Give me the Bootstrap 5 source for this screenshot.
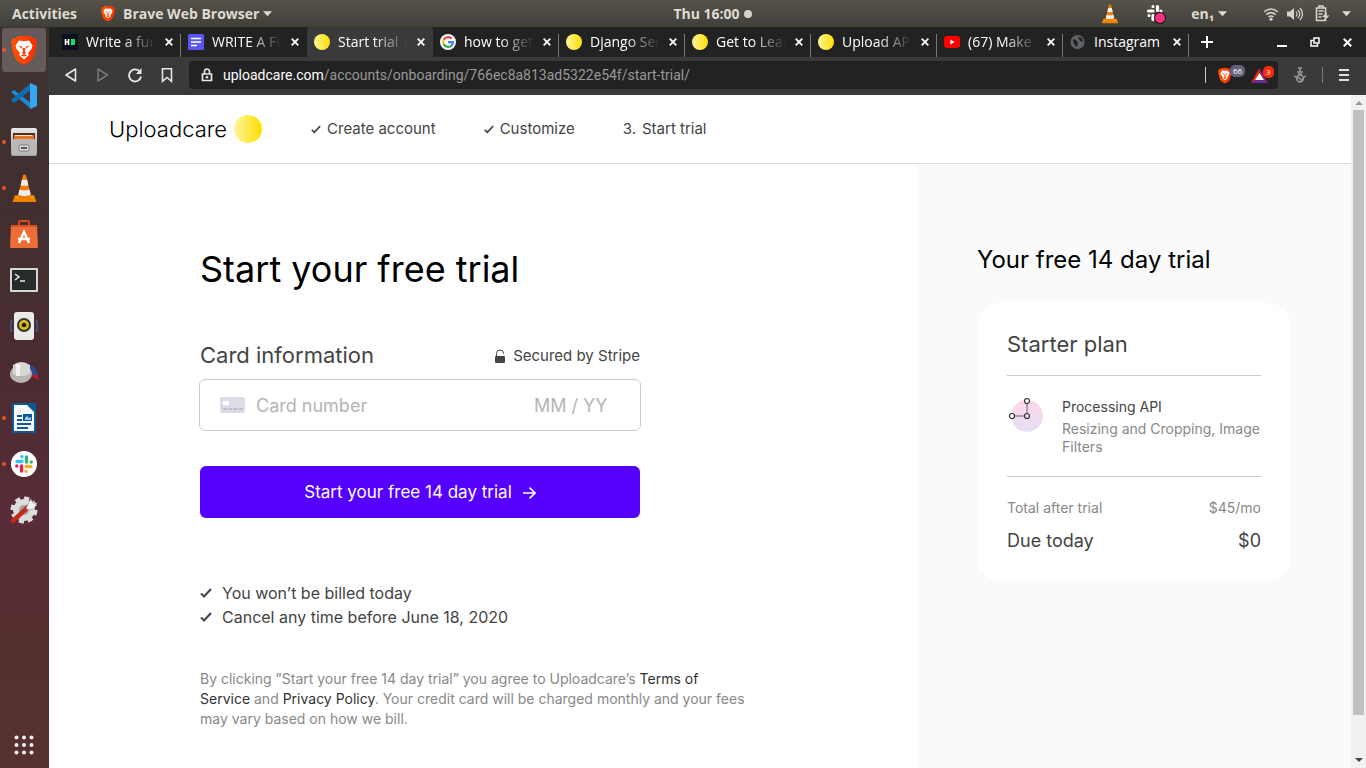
<!DOCTYPE html>
<html lang="en">
<head>
<meta charset="utf-8">
<meta name="viewport" content="width=device-width, initial-scale=1">
<title>Start trial | Uploadcare</title>
<link rel="stylesheet" href="https://cdn.jsdelivr.net/npm/bootstrap@5.3.0/dist/css/bootstrap.min.css">
<style>
  body { font-family: Inter, "Liberation Sans", sans-serif; color: #444; background: #fff; }
  svg { display: block; flex: none; }
  button.bare { border: 0; background: none; padding: 0; color: inherit; }
  .shell { font-family: "Open Sans", "Noto Sans", sans-serif; font-size: 14px; line-height: 20px; }

  /* desktop panel */
  .panel { display: grid; grid-template-columns: 1fr auto 1fr; height: 27px; padding: 0 15px 0 12px; background: linear-gradient(#57534a, #403f3a); color: #dfdbd2; font-weight: 700; }
  .panel .clock { margin-left: 62px; }
  .tray-gap { margin-left: 36px; }
  .tray-gap-sm { margin-left: 26px; }
  .dock { width: 49px; padding-right: 1px; background: linear-gradient(#3f3332 0%, #40302f 22%, #4a2c30 45%, #582c38 66%, #562f30 82%, #553230 100%); }
  .dock-app { position: relative; height: 46px; width: 100%; display: flex; align-items: center; justify-content: center; }
  .dock-app.focused::after { content: ""; position: absolute; inset: 1px 2px; border-radius: 3px; background: rgba(255,255,255,.2); }
  .dock-app svg { position: relative; z-index: 1; }
  .dock-app.running::before { content: ""; position: absolute; left: 2px; width: 4px; height: 4px; border-radius: 50%; background: #e95420; z-index: 1; }

  /* browser frame */
  .tabs { height: 30px; background: #222; padding-left: 6px; color: #fff; }
  .tab { flex: 0 1 126px; min-width: 0; height: 30px; padding: 0 8px 0 7px; gap: 8px; position: relative; }
  .tab.active-tab { background: #3a3a3a; border-radius: 4px 4px 0 0; }
  .tab.split::after { content: ""; position: absolute; right: 0; top: 7px; bottom: 0; width: 1px; background: #777; }
  .tab-title { flex: 1; overflow: hidden; white-space: nowrap; -webkit-mask-image: linear-gradient(90deg, #000 50%, transparent 98%); mask-image: linear-gradient(90deg, #000 50%, transparent 98%); }
  .tab-title.whole { -webkit-mask-image: none; mask-image: none; }
  .window-buttons { gap: 23px; margin-right: 14px; }
  .toolbar { height: 38px; background: #3a3a3a; padding: 4px 17px 6px 13px; color: #e8e8e8; }
  .omnibox { background: #222; border-radius: 4px; height: 28px; padding: 0 2px 0 10px; margin-left: 14px; }
  .url { font-family: Roboto, sans-serif; color: #999; }
  .shields { margin-right: 19px; }
  .counter { position: absolute; top: -2px; left: 12px; font-size: 8px; line-height: 12px; height: 12px; padding: 0 3px; border-radius: 5px; color: #fff; font-weight: 400; }
  .counter-blocked { background: #62617a; }
  .counter-ads { background: #fb2a08; }
  .rule { width: 1px; height: 16px; background: #777; }
  .rule-light { background: #ccc; }

  .scroller { width: 15px; background: #f1f1f1; padding: 4px 0; }
  .scroller .thumb { background: #c1c1c1; margin-top: 3px; flex: 0 0 91%; }

  /* page */
  .site-header { height: 69px; border-bottom: 1px solid #ddd; padding-left: 60px; font-size: 15px; }
  .brand { font-family: Inter, sans-serif; font-weight: 300; font-size: 22px; color: #000; gap: 7px; text-decoration: none; margin-right: 49px; }
  .sun { border-radius: 50%; background: linear-gradient(90deg, #fff59c, #ffde00); flex: none; }
  .sun-lg { width: 28px; height: 28px; }
  .sun-sm { width: 16px; height: 16px; }
  .steps { gap: 48px; }
  .steps li { gap: 6px; }
  .checkout { padding: 81px 24px 0 151px; }
  .checkout h1 { font-size: 36px; line-height: 48px; font-weight: 400; color: #000; margin: 0 0 48px; }
  .pay-form { max-width: 440px; }
  .section-title { font-size: 22px; line-height: 28px; }
  .secured { font-size: 15px; padding-top: 2px; }
  .card-box { height: 52px; border: 1px solid #ccc; border-radius: 6px; padding: 0 32px 0 20px; margin: 10px -1px 0; gap: 11px; font-size: 18px; }
  .card-box input { border: 0; outline: 0; padding: 0; min-width: 0; color: #444; background: none; }
  .card-box input::placeholder { color: #b5b5b5; opacity: 1; }
  .card-box .expiry { width: 80px; padding-top: 1px; }
  .btn-trial { height: 52px; margin-top: 35px; padding-top: 8px; border-radius: 6px; background: #50f; color: #fff; font-size: 17px; gap: 11px; }
  .btn-trial:hover { background: #4a00de; color: #fff; }
  .promises { margin: 63px 0 0; font-size: 16px; line-height: 24px; }
  .promises li { gap: 10px; }
  .terms { margin: 40px 0 0; max-width: 550px; font-size: 14px; line-height: 20px; color: #888; }
  .terms a { color: #333; text-decoration: none; }
  .summary { background: #fafafa; padding: 80px 60px 0; }
  .summary h2 { font-size: 24px; line-height: 32px; font-weight: 400; color: #000; margin: 0 0 27px; }
  .plan { background: #fff; border-radius: 24px; padding: 25px 30px 26px; }
  .plan h3 { font-size: 22px; line-height: 32px; font-weight: 400; margin: 0; padding-bottom: 15px; border-bottom: 1px solid #ccc; }
  .feature { padding: 22px 0 20px; border-bottom: 1px solid #ccc; font-size: 14px; line-height: 18px; gap: 17px; }
  .muted { color: #888; }
  .totals { font-size: 14px; line-height: 20px; padding-top: 21px; }
  .due { font-size: 18px; line-height: 28px; padding-top: 9px; }
</style>
</head>
<body class="vh-100 d-flex flex-column overflow-hidden">

<svg width="0" height="0" class="position-absolute" aria-hidden="true">
  <defs>
    <linearGradient id="silver" x1="0" y1="0" x2="0" y2="1"><stop offset="0" stop-color="#e8e8e6"/><stop offset="1" stop-color="#a3a3a1"/></linearGradient>
    <linearGradient id="petal" x1="0" y1="0" x2="0" y2="1"><stop offset="0" stop-color="#ffd6e8"/><stop offset="1" stop-color="#e6e0f5"/></linearGradient>
    <linearGradient id="flame" x1="0" x2="1"><stop offset="0" stop-color="#ff5500"/><stop offset="1" stop-color="#ff2a00"/></linearGradient>
  </defs>
  <symbol id="lion" viewBox="0 0 26 30">
    <path fill="url(#flame)" d="M7 1h12l2.500 2.500L24 3l2 4-1 3 .5 2-3.500 11-3 3.500L13 30l-6-3.500L4 23 .5 12 1 10 0 7l2-4 2.500.5z"/>
    <path fill="#fff" d="M8 5.500l5 .8 5-.8 3.500 5-1 3.500-3.500 4 1 2-5 4.500L8 20l1-2-3.500-4-1-3.500z"/>
    <path fill="#ff4400" d="M7 10.500l4.500 1.200-.8 1.800zM19 10.500l-4.500 1.200.8 1.800zM11.500 13h3l-.5 4 1.500 1-2.500 1.500-2.500-1.500 1.500-1zM9.500 20.500l3.500-1.300 3.500 1.300-3.500 1z"/>
  </symbol>
  <symbol id="cone" viewBox="0 0 26 30">
    <path fill="#f08200" d="M3 22h20l2.500 7H.5z"/><path fill="#ffa726" d="M5 23h16l1 2H4z"/>
    <path fill="#f57c00" d="M11.500 1q1.500-1 3 0l5.500 23q-7 4-14 0z"/>
    <path fill="#eee" d="M10.300 6h5.400l1.300 5.500q-4 1.500-8 0zM7.800 16q5 2 10.400 0l1.300 5.500q-6.500 3-13 0z"/>
  </symbol>
  <symbol id="hash" viewBox="0 0 18 18">
    <g stroke-width="3.400" stroke-linecap="round" fill="none">
      <path stroke="#36c5f0" d="M7 1.800h.01M7 6.500H2"/><path stroke="#2eb67d" d="M16.200 7h.01M11.500 7V2"/>
      <path stroke="#ecb22e" d="M11 16.200h.01M11 11.500h5"/><path stroke="#e01e5a" d="M1.800 11h.01M6.500 11v5"/>
    </g>
  </symbol>
  <symbol id="cross" viewBox="0 0 8 8"><path d="M.7.7l6.600 6.600M7.300.7L.7 7.300" stroke="currentColor" stroke-width="1.800"/></symbol>
  <symbol id="tick" viewBox="0 0 12 10"><path d="M1 5.500L4 8.500 11 1" fill="none" stroke="currentColor" stroke-width="2"/></symbol>
  <symbol id="down" viewBox="0 0 10 6"><path d="M0 0h10L5 5.500z" fill="currentColor"/></symbol>
</svg>

<header class="shell panel align-items-center">
  <div class="d-flex align-items-center">
    <button class="bare fw-bold">Activities</button>
    <button class="bare fw-bold d-flex align-items-center ms-4">
      <svg width="14" height="17" class="me-2"><use href="#lion"/></svg>Brave Web Browser
      <svg width="9" height="6" class="ms-1"><use href="#down"/></svg>
    </button>
  </div>
  <button class="bare clock fw-bold d-flex align-items-center">Thu 16:00<svg width="8" height="8" class="ms-1"><circle cx="4" cy="4" r="4" fill="#d5d2ca"/></svg></button>
  <div class="d-flex align-items-center justify-content-end">
    <svg width="18" height="20"><use href="#cone"/></svg>
    <svg width="22" height="22" viewBox="0 0 22 22" class="tray-gap-sm"><g stroke="#fff" stroke-width="3.200" stroke-linecap="round"><path d="M8 3.500h.01M8 8H3.500M12.500 3.500v4M16 8h.01M4 12.500h.01M8 12.500v4"/></g><circle cx="15" cy="15" r="6" fill="#111"/><circle cx="15" cy="15" r="5" fill="#f5317f"/></svg>
    <span class="ms-4">en₁</span><svg width="9" height="6" class="ms-1"><use href="#down"/></svg>
    <svg width="16" height="14" viewBox="0 0 16 14" class="tray-gap"><g fill="none" stroke="#d5d2ca" stroke-width="1.600"><path d="M1 5q7-6 14 0M3.300 7.600q4.700-4 9.400 0M5.500 10q2.500-2 5 0"/></g><circle cx="8" cy="12.200" r="1.600" fill="#d5d2ca"/></svg>
    <svg width="16" height="14" viewBox="0 0 16 14" class="mx-2 ms-2"><path fill="#d5d2ca" d="M0 4.500h3L7 1v12L3 9.500H0z"/><path d="M9 4.500q2 2.500 0 5M11 2.800q3.500 4.200 0 8.400M13 1q5 6 0 12" fill="none" stroke="#d5d2ca" stroke-width="1.200"/></svg>
    <svg width="15" height="17" viewBox="0 0 15 17" class="ms-1 me-1"><path d="M4 3V1h4v2M1.500 3h9v12.500h-9zM3.500 6h5M3.500 9h4M3.500 12h3" fill="none" stroke="#d5d2ca" stroke-width="1.600"/><path d="M12 7l-5 5h3l-1 4 5.500-5.500h-3z" fill="#d5d2ca"/></svg>
    <svg width="9" height="6" class="ms-2"><use href="#down"/></svg>
  </div>
</header>

<div class="d-flex flex-fill overflow-hidden">
  <nav class="dock flex-shrink-0 d-flex flex-column" aria-label="Applications">
    <button class="bare dock-app focused running" aria-label="Brave"><svg width="26" height="30"><use href="#lion"/></svg></button>
    <button class="bare dock-app" aria-label="Code"><svg width="26" height="26" viewBox="0 0 26 26"><path fill="#1f8ad2" d="M0 9l3-2 17 13v6L0 9z"/><path fill="#0e6db3" d="M0 17l3 3L20 7V0L0 17z"/><path fill="#35a6f0" d="M19 0l7 3v20l-7 3z"/></svg></button>
    <button class="bare dock-app running" aria-label="Files"><svg width="26" height="28" viewBox="0 0 26 28"><rect width="26" height="28" rx="2" fill="url(#silver)"/><path fill="#4a3326" d="M2 5h22v6H2z"/><path fill="#e8752a" d="M3 7h20v4H3z"/><path fill="#ffe0b8" d="M4 7h17v1H4z"/><path fill="#b8b8b6" d="M1 11h24v16H1z"/><rect x="8" y="17" width="10" height="6" rx="1.500" fill="#ddd" stroke="#777"/><path d="M10 20h6" stroke="#555" stroke-width="2"/></svg></button>
    <button class="bare dock-app running" aria-label="Media player"><svg width="25" height="29"><use href="#cone"/></svg></button>
    <button class="bare dock-app" aria-label="Software"><svg width="28" height="28" viewBox="0 0 28 28"><path d="M9 8V3q0-2 2-2h6q2 0 2 2v5" fill="none" stroke="#d64a1c" stroke-width="2"/><path fill="#ee6c35" d="M1 5h26l1 22q0 1-1 1H1q-1 0-1-1z"/><path fill="#d9531f" d="M1 5h26v2H1z"/><path d="M9 23l5-11 5 11M8 19h12" fill="none" stroke="#fff" stroke-width="2.400"/></svg></button>
    <button class="bare dock-app" aria-label="Terminal"><svg width="28" height="24" viewBox="0 0 28 24"><rect width="28" height="24" rx="1" fill="#d5d5d3"/><rect x="2" y="2" width="24" height="20" fill="#262b2c"/><path d="M5 6l4 3-4 3M10 13h5" fill="none" stroke="#eee" stroke-width="1.500"/></svg></button>
    <button class="bare dock-app" aria-label="Sound"><svg width="28" height="30" viewBox="0 0 28 30"><path d="M2 9q-3 6 0 12M26 9q3 6 0 12" fill="none" stroke="#3d5580" stroke-width="2"/><rect x="4" y="1" width="20" height="28" rx="3" fill="#eaeae8"/><circle cx="14" cy="14" r="7" fill="#34342c"/><circle cx="14" cy="14" r="5" fill="#d8b820"/><circle cx="14" cy="14" r="2.300" fill="#222"/></svg></button>
    <button class="bare dock-app" aria-label="Mixer"><svg width="30" height="24" viewBox="0 0 30 24"><path d="M20 5q9 2 9 13l-9-3z" fill="#2b4f8e"/><path d="M22 15h7v5z" fill="#d01616"/><ellipse cx="12" cy="14" rx="11" ry="9" fill="#b9b3b1"/><path d="M4 5q8-6 17 0v9q-9 4-17 0z" fill="#d9d5d3"/><path d="M7 4h4v12H7z" fill="#f3f1f0"/></svg></button>
    <button class="bare dock-app running" aria-label="Writer"><svg width="24" height="30" viewBox="0 0 24 30"><path fill="#0d5a93" d="M0 0h16l8 8v22H0z"/><path fill="#f6f8fa" d="M2 2h13l7 7v19H2z"/><path fill="#0d5a93" d="M16 0h8v8z"/><path d="M5 13h5M5 17h5M5 21h14M5 25h11" stroke="#0d5a93" stroke-width="2"/><path fill="#0d5a93" d="M11 11h9v7h-9z"/><path fill="#9fc9e8" d="M13 15l2-2 2 2 2-1v3h-6z"/></svg></button>
    <button class="bare dock-app running" aria-label="Slack"><svg width="26" height="26" viewBox="0 0 26 26"><circle cx="13" cy="13" r="13" fill="#fff"/><use href="#hash" x="4" y="4" width="18" height="18"/></svg></button>
    <button class="bare dock-app" aria-label="Settings"><svg width="28" height="28" viewBox="0 0 28 28"><circle cx="14" cy="14" r="10.500" fill="#ddd" stroke="#ddd"/><circle cx="14" cy="14" r="11.500" fill="none" stroke="#ddd" stroke-width="4" stroke-dasharray="5 4"/><circle cx="14" cy="14" r="5" fill="#a9a09f"/><path d="M3 25L18 11" stroke="#c22b1a" stroke-width="4.500" stroke-linecap="round"/><path d="M16 12l5-9 2 4 4 0-3 6-6 1z" fill="#f2f2f2" stroke="#888" stroke-width=".6"/></svg></button>
    <button class="bare dock-app mt-auto" aria-label="Show applications"><svg width="20" height="20" viewBox="0 0 20 20" fill="#f2f0ef"><circle cx="2.500" cy="2.500" r="2"/><circle cx="10" cy="2.500" r="2"/><circle cx="17.500" cy="2.500" r="2"/><circle cx="2.500" cy="10" r="2"/><circle cx="10" cy="10" r="2"/><circle cx="17.500" cy="10" r="2"/><circle cx="2.500" cy="17.500" r="2"/><circle cx="10" cy="17.500" r="2"/><circle cx="17.500" cy="17.500" r="2"/></svg></button>
  </nav>

  <div class="flex-fill d-flex flex-column overflow-hidden">
    <div class="shell tabs d-flex align-items-center flex-shrink-0">
      <div class="tab split d-flex align-items-center"><svg width="16" height="16" viewBox="0 0 16 16"><path fill="#0b1020" d="M0 0h16v16H0z"/><path d="M3.500 5v6M6.500 5v6M3 8h4" stroke="#fff" stroke-width="1.600"/><path fill="#00ea64" d="M9 5h4v6H9z"/></svg><span class="tab-title">Write a fun</span><button class="bare" aria-label="Close tab"><svg width="8" height="8"><use href="#cross"/></svg></button></div>
      <div class="tab d-flex align-items-center"><svg width="16" height="16" viewBox="0 0 16 16"><rect width="16" height="16" rx="1.500" fill="#5b55f5"/><path d="M3 4.500h10M3 8h10M3 11.500h6" stroke="#fff" stroke-width="1.700"/></svg><span class="tab-title">WRITE A FU</span><button class="bare" aria-label="Close tab"><svg width="8" height="8"><use href="#cross"/></svg></button></div>
      <div class="tab active-tab d-flex align-items-center"><span class="sun sun-sm"></span><span class="tab-title">Start trial |</span><button class="bare" aria-label="Close tab"><svg width="8" height="8"><use href="#cross"/></svg></button></div>
      <div class="tab split d-flex align-items-center"><svg width="16" height="16" viewBox="0 0 16 16"><circle cx="8" cy="8" r="8" fill="#fff"/><g fill="none" stroke-width="2.200"><path stroke="#ea4335" d="M11.500 4.600A5 5 0 0 0 3.700 5.700"/><path stroke="#fbbc05" d="M3.700 5.700a5 5 0 0 0 0 4.600"/><path stroke="#34a853" d="M3.700 10.300a5 5 0 0 0 7.500 1.500"/><path stroke="#4285f4" d="M11.200 11.800A5 5 0 0 0 13 8.200H8"/></g></svg><span class="tab-title">how to get</span><button class="bare" aria-label="Close tab"><svg width="8" height="8"><use href="#cross"/></svg></button></div>
      <div class="tab split d-flex align-items-center"><span class="sun sun-sm"></span><span class="tab-title">Django Ser</span><button class="bare" aria-label="Close tab"><svg width="8" height="8"><use href="#cross"/></svg></button></div>
      <div class="tab split d-flex align-items-center"><span class="sun sun-sm"></span><span class="tab-title">Get to Lear</span><button class="bare" aria-label="Close tab"><svg width="8" height="8"><use href="#cross"/></svg></button></div>
      <div class="tab split d-flex align-items-center"><span class="sun sun-sm"></span><span class="tab-title">Upload API</span><button class="bare" aria-label="Close tab"><svg width="8" height="8"><use href="#cross"/></svg></button></div>
      <div class="tab split d-flex align-items-center"><svg width="16" height="12" viewBox="0 0 16 12"><rect width="16" height="12" rx="3" fill="#f00"/><path fill="#fff" d="M6.300 3.500v5L10.500 6z"/></svg><span class="tab-title">(67) Make y</span><button class="bare" aria-label="Close tab"><svg width="8" height="8"><use href="#cross"/></svg></button></div>
      <div class="tab split d-flex align-items-center"><svg width="16" height="16" viewBox="0 0 16 16"><circle cx="7.500" cy="8" r="7" fill="#5f6368"/><path d="M3 5l3 1 2 3-1 4q-4-2-4-8zM8 3l4 1 1 4-3-1z" fill="#222"/></svg><span class="tab-title whole">Instagram</span><button class="bare" aria-label="Close tab"><svg width="8" height="8"><use href="#cross"/></svg></button></div>
      <button class="bare ms-2 ps-1" aria-label="New tab"><svg width="12" height="12"><path d="M6 0v12M0 6h12" stroke="#fff" stroke-width="2"/></svg></button>
      <div class="window-buttons d-flex align-items-center ms-auto">
        <button class="bare" aria-label="Minimize"><svg width="10" height="10"><path d="M0 9h10" stroke="#fff" stroke-width="2"/></svg></button>
        <button class="bare" aria-label="Restore"><svg width="10" height="10"><path d="M4 1h5v5H4zM3 3.500H1V9h6.500V7" fill="none" stroke="#fff" stroke-width="1.500"/></svg></button>
        <button class="bare" aria-label="Close"><svg width="9" height="9"><use href="#cross"/></svg></button>
      </div>
    </div>

    <div class="shell toolbar d-flex align-items-center flex-shrink-0">
      <button class="bare" aria-label="Back"><svg width="17" height="16" viewBox="0 0 17 16"><path d="M13.500 2v12L4 8z" fill="none" stroke="currentColor" stroke-width="1.600" stroke-linejoin="round"/></svg></button>
      <button class="bare ms-3" aria-label="Forward" disabled><svg width="16" height="16" viewBox="0 0 16 16"><path d="M3 2v12l9.500-6z" fill="none" stroke="#777" stroke-width="1.600" stroke-linejoin="round"/></svg></button>
      <button class="bare ms-3" aria-label="Reload"><svg width="16" height="16" viewBox="0 0 16 16"><path d="M13 5A6 6 0 1 0 14 9.500" fill="none" stroke="currentColor" stroke-width="1.800"/><path fill="currentColor" d="M14.500 1v6H9z"/></svg></button>
      <button class="bare ms-3" aria-label="Bookmark"><svg width="16" height="16" viewBox="0 0 16 16"><path d="M3.500 1.800h9v12.500L8 10.500l-4.500 3.800z" fill="none" stroke="currentColor" stroke-width="1.600"/></svg></button>
      <div class="omnibox d-flex align-items-center flex-fill">
        <svg width="16" height="16" viewBox="0 0 16 16" class="me-2"><path d="M3.500 7h9v6.500h-9zM5.500 6.500V4.500a2.500 2.500 0 0 1 5 0v2" fill="none" stroke="currentColor" stroke-width="1.700"/><circle cx="8" cy="10.200" r="1.300" fill="currentColor"/></svg>
        <div class="flex-fill text-nowrap overflow-hidden url"><span class="text-white">uploadcare.com</span>/accounts/onboarding/766ec8a813ad5322e54f/start-trial/</div>
        <div class="rule rule-light me-2"></div>
        <button class="bare shields position-relative ms-1" aria-label="Shields"><svg width="14" height="17"><use href="#lion"/></svg><span class="counter counter-blocked">66</span></button>
        <button class="bare position-relative me-2" aria-label="Rewards"><svg width="17" height="15" viewBox="0 0 17 15"><path fill="#ff2000" d="M8.500 0v5L4 12l-4 3z"/><path fill="#9e1f63" d="M8.500 0L17 15l-4-3-4.500-7z"/><path fill="#662d91" d="M0 15h17l-4-3H4z"/><path fill="#fff" d="M8.500 5l4.500 7H4z"/></svg><span class="counter counter-ads">3</span></button>
      </div>
      <svg width="12" height="18" viewBox="0 0 12 18" class="ms-3"><g fill="none" stroke="#999" stroke-width="1.400"><path d="M4 2h4M6 2v4M3 6h6M4 8h4"/><circle cx="6" cy="12.500" r="3.500"/><path d="M3 13q2-3 3 0t3-1M0 10l2 1M12 10l-2 1"/></g></svg>
      <div class="rule ms-3"></div>
      <button class="bare ms-3" aria-label="Menu"><svg width="10" height="14"><path d="M0 2h10M0 7h10M0 12h10" stroke="#e0e0e0" stroke-width="2"/></svg></button>
    </div>

    <div class="flex-fill d-flex overflow-hidden">
      <div class="flex-fill d-flex flex-column overflow-hidden">
        <header class="site-header d-flex align-items-center flex-shrink-0">
          <a href="#" class="brand d-flex align-items-center">Uploadcare<span class="sun sun-lg"></span></a>
          <ol class="steps list-unstyled d-flex mb-0">
            <li class="d-flex align-items-center"><svg width="10" height="9"><use href="#tick"/></svg>Create account</li>
            <li class="d-flex align-items-center"><svg width="10" height="9"><use href="#tick"/></svg>Customize</li>
            <li class="d-flex align-items-center"><span>3.</span>Start trial</li>
          </ol>
        </header>

        <main class="row g-0 flex-fill overflow-hidden">
          <section class="col-8 checkout">
            <h1>Start your free trial</h1>
            <form class="pay-form">
              <div class="d-flex align-items-center justify-content-between">
                <label for="number" class="section-title">Card information</label>
                <span class="secured d-flex align-items-center"><svg width="10" height="15" viewBox="0 0 10 15" class="me-2"><path d="M1.500 7V4.500a3.500 3.500 0 0 1 7 0V5" fill="none" stroke="#444"/><rect y="7" width="10" height="7" rx="1" fill="#444"/></svg>Secured by Stripe</span>
              </div>
              <div class="card-box d-flex align-items-center">
                <svg width="25" height="16" viewBox="0 0 25 16"><rect width="25" height="16" rx="2" fill="#dcdce6"/><rect x="3" y="4" width="6" height="4" rx="1" fill="#fff"/><path d="M3 12h20" stroke="#b4b4c8" stroke-width="1.600" stroke-dasharray="4 1.300"/></svg>
                <input id="number" class="flex-fill" placeholder="Card number">
                <input class="expiry" aria-label="Expiry date" placeholder="MM / YY">
              </div>
              <button type="button" class="btn btn-trial w-100 d-flex align-items-center justify-content-center">Start your free 14 day trial<svg width="13" height="12" viewBox="0 0 13 12"><path d="M0 6h12M6.500 .7L12 6l-5.500 5.300" fill="none" stroke="#fff" stroke-width="1.600"/></svg></button>
            </form>
            <ul class="promises list-unstyled">
              <li class="d-flex align-items-center"><svg width="12" height="10"><use href="#tick"/></svg>You won’t be billed today</li>
              <li class="d-flex align-items-center"><svg width="12" height="10"><use href="#tick"/></svg>Cancel any time before June 18, 2020</li>
            </ul>
            <p class="terms">By clicking ”Start your free 14 day trial” you agree to Uploadcare’s <a href="#">Terms of Service</a> and <a href="#">Privacy Policy</a>. Your credit card will be charged monthly and your fees may vary based on how we bill.</p>
          </section>

          <aside class="col-4 summary">
            <h2>Your free 14 day trial</h2>
            <div class="plan">
              <h3>Starter plan</h3>
              <div class="feature d-flex">
                <svg width="38" height="38" viewBox="0 0 38 38"><circle cx="20" cy="18" r="16" fill="url(#petal)"/><path d="M20 5v10M7 18h10" stroke="#998a94" stroke-width="1.500"/><g fill="#fff" stroke="#333" stroke-width="1.200"><circle cx="20" cy="3" r="2.500"/><circle cx="5" cy="18" r="2.500"/><circle cx="20" cy="18" r="2.500" fill="#f6dcec"/></g></svg>
                <div><div class="mb-1">Processing API</div><div class="muted">Resizing and Cropping, Image Filters</div></div>
              </div>
              <div class="totals muted d-flex justify-content-between"><span>Total after trial</span><span>$45/mo</span></div>
              <div class="due d-flex justify-content-between"><span>Due today</span><span>$0</span></div>
            </div>
          </aside>
        </main>
      </div>
      <div class="scroller flex-shrink-0 d-flex flex-column align-items-center" aria-hidden="true">
        <svg width="8" height="8"><path d="M0 6l4-4 4 4z" fill="#999"/></svg>
        <div class="thumb w-75"></div>
        <svg width="8" height="8" class="mt-auto"><path d="M0 2l4 4 4-4z" fill="#444"/></svg>
      </div>
    </div>
  </div>
</div>
<script src="https://cdn.jsdelivr.net/npm/bootstrap@5.3.0/dist/js/bootstrap.bundle.min.js"></script>
</body>
</html>
